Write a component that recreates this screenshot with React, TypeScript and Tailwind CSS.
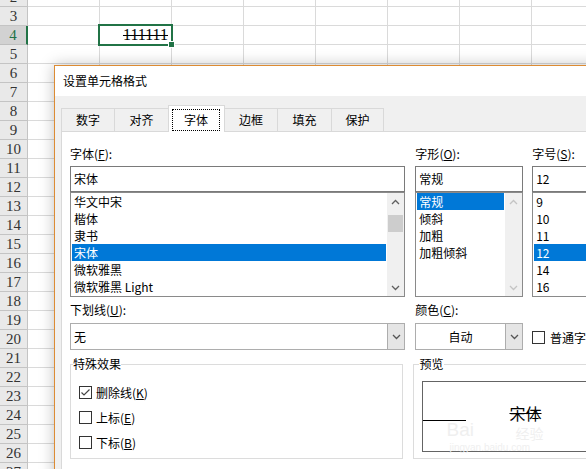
import React from "react";

const rows = Array.from({ length: 26 }, (_, i) => i + 2);
const cols = Array.from({ length: 8 }, (_, i) => i);

function Sheet() {
  return (
    <div className="-mt-[12px] flex flex-col font-[family-name:'Liberation_Serif',serif]">
      {rows.map((r) => (
        <div key={r} className="flex h-[19px]">
          <div
            className={
              r === 4
                ? "flex w-[28px] shrink-0 items-center justify-center border-b border-r-2 border-b-[#bfbfbf] border-r-[#217346] bg-[#d2d2d2] text-[15px] leading-none text-[#217346]"
                : "flex w-[28px] shrink-0 items-center justify-center border-b border-r border-[#c4c4c4] bg-[#e9e9e9] text-[15px] leading-none text-[#333]"
            }
          >
            {r}
          </div>
          {cols.map((c) => (
            <div
              key={c}
              className="flex w-[72px] shrink-0 items-center justify-end border-b border-r border-[#dadada] pr-[3px] text-[16px] leading-none"
            >
              {r === 4 && c === 1 ? <span className="line-through">111111</span> : null}
            </div>
          ))}
        </div>
      ))}
    </div>
  );
}

function Chevron({ up, color }: { up: boolean; color: string }) {
  return (
    <svg width="9" height="6" viewBox="0 0 9 6" className={color}>
      <polyline
        points={up ? "1,5 4.5,1.5 8,5" : "1,1 4.5,4.5 8,1"}
        fill="none"
        stroke="currentColor"
        strokeWidth="1.3"
      />
    </svg>
  );
}

function ScrollBar({ enabled }: { enabled: boolean }) {
  const c = enabled ? "text-[#606060]" : "text-[#c4c4c4]";
  return (
    <div className="flex w-[17px] shrink-0 flex-col bg-[#f0f0f0]">
      <div className="flex h-[17px] items-center justify-center">
        <Chevron up color={c} />
      </div>
      <div className="flex-1 pt-[5px]">
        {enabled && <div className="mx-auto h-[17px] w-[15px] bg-[#cdcdcd]" />}
      </div>
      <div className="flex h-[17px] items-center justify-center">
        <Chevron up={false} color={c} />
      </div>
    </div>
  );
}

function ListBox({
  items,
  selected,
  scroll,
}: {
  items: string[];
  selected: string;
  scroll?: React.ReactNode;
}) {
  return (
    <div className="flex h-[105px] border border-[#8a8a8a] bg-white">
      <div className="flex-1 overflow-hidden px-px">
        {items.map((it) => (
          <div
            key={it}
            className={
              it === selected
                ? "h-[17px] bg-[#0078d7] pl-[2px] leading-[17px] text-white"
                : "h-[17px] pl-[2px] leading-[17px] text-black"
            }
          >
            {it}
          </div>
        ))}
      </div>
      {scroll}
    </div>
  );
}

function Input({ value }: { value: string }) {
  return (
    <div className="flex h-[26px] items-center border border-[#7a7a7a] bg-white pl-[3px]">{value}</div>
  );
}

function Label({ text, k }: { text: string; k: string }) {
  return (
    <div className="h-[16px] leading-[16px]">
      {text}(<span className="underline">{k}</span>):
    </div>
  );
}

function Select({ value, center }: { value: string; center?: boolean }) {
  return (
    <div className="flex h-[27px] border border-[#adadad] bg-white">
      <div className={center ? "flex flex-1 items-center justify-center" : "flex flex-1 items-center pl-[3px]"}>
        {value}
      </div>
      <div className="flex w-[17px] items-center justify-center border-l border-[#adadad] bg-[#e5e5e5]">
        <Chevron up={false} color="text-[#555]" />
      </div>
    </div>
  );
}

function CheckBox({ checked }: { checked?: boolean }) {
  return (
    <div className="flex h-[13px] w-[13px] shrink-0 items-center justify-center border border-[#333] bg-white">
      {checked && (
        <svg width="11" height="11" viewBox="0 0 11 11">
          <polyline points="1.5,5.5 4,8 9.5,2.5" fill="none" stroke="#444" strokeWidth="1.2" />
        </svg>
      )}
    </div>
  );
}

function CheckRow({ text, k, checked }: { text: string; k: string; checked?: boolean }) {
  return (
    <div className="flex h-[25px] items-center gap-[4px] pl-[8px]">
      <CheckBox checked={checked} />
      <span>
        {text}(<span className="underline">{k}</span>)
      </span>
    </div>
  );
}

function Dialog() {
  return (
    <div className="absolute left-[54px] top-[65px] h-[420px] w-[560px] border border-[#dc8b33] bg-[#f0f0f0] text-[12px] text-black shadow-[0_0_14px_rgba(0,0,0,0.25)] font-[family-name:'Noto_Sans_CJK_SC',sans-serif]">
      <div className="flex h-[30px] items-center bg-white pl-[8px]">设置单元格格式</div>
      <div className="pl-[6px] pt-[9px]">
        <div className="flex h-[26px] items-end">
          <div className="flex h-[23px] w-[53px] items-center justify-center border-l border-t border-[#d9d9d9]">数字</div>
          <div className="flex h-[23px] w-[54px] items-center justify-center border-l border-t border-[#d9d9d9]">对齐</div>
          <div className="relative z-10 -mb-px flex h-[27px] w-[57px] border-l border-r border-t border-[#d9d9d9] bg-white pb-[1px] pl-[3px] pr-[4px] pt-[3px]">
            <div className="flex flex-1 items-center justify-center border border-dotted border-black">字体</div>
          </div>
          <div className="flex h-[23px] w-[52px] items-center justify-center border-t border-[#d9d9d9]">边框</div>
          <div className="flex h-[23px] w-[54px] items-center justify-center border-l border-t border-[#d9d9d9]">填充</div>
          <div className="flex h-[23px] w-[53px] items-center justify-center border-l border-r border-t border-[#d9d9d9]">保护</div>
        </div>
        <div className="h-[400px] border border-[#d9d9d9] bg-white pl-[8px] pt-[14px]">
          <div className="flex">
            <div className="w-[336px]">
              <Label text="字体" k="F" />
              <div className="mt-[4px]">
                <Input value="宋体" />
                <ListBox
                  items={["华文中宋", "楷体", "隶书", "宋体", "微软雅黑", "微软雅黑 Light"]}
                  selected="宋体"
                  scroll={<ScrollBar enabled />}
                />
              </div>
            </div>
            <div className="ml-[10px] w-[108px]">
              <Label text="字形" k="O" />
              <div className="mt-[4px]">
                <Input value="常规" />
                <ListBox
                  items={["常规", "倾斜", "加粗", "加粗倾斜"]}
                  selected="常规"
                  scroll={<ScrollBar enabled={false} />}
                />
              </div>
            </div>
            <div className="ml-[9px] w-[80px]">
              <Label text="字号" k="S" />
              <div className="mt-[4px]">
                <Input value="12" />
                <ListBox items={["9", "10", "11", "12", "14", "16"]} selected="12" />
              </div>
            </div>
          </div>

          <div className="mt-[5px] flex">
            <div className="w-[336px]">
              <Label text="下划线" k="U" />
              <div className="mt-[5px]">
                <Select value="无" />
              </div>
            </div>
            <div className="ml-[10px] w-[108px]">
              <Label text="颜色" k="C" />
              <div className="mt-[5px]">
                <Select value="自动" center />
              </div>
            </div>
            <div className="ml-[9px] flex w-[80px] flex-col">
              <div className="h-[16px]" />
              <div className="mt-[5px] flex h-[27px] items-center gap-[5px] pt-[2px]">
                <CheckBox />
                <span className="whitespace-nowrap">
                  普通字体(<span className="underline">N</span>)
                </span>
              </div>
            </div>
          </div>

          <div className="mt-[6px] flex items-start">
            <fieldset className="w-[336px] border border-[#dcdcdc] pb-[3px]">
              <legend className="ml-[2px] leading-[16px]">特殊效果</legend>
              <div className="pt-[8px]">
                <CheckRow text="删除线" k="K" checked />
                <CheckRow text="上标" k="E" />
                <CheckRow text="下标" k="B" />
              </div>
            </fieldset>
            <fieldset className="ml-[10px] w-[200px] border border-[#dcdcdc] pb-[6px]">
              <legend className="ml-[5px] leading-[16px]">预览</legend>
              <div className="relative ml-[8px] mt-[9px] flex h-[71px] items-start border border-[#646464] pt-[22px]">
                <div className="h-[17px] w-[43px] border-b border-black" />
                <div className="relative z-10 ml-[43px] text-[16px] leading-[18px] line-through">宋体</div>
                <div className="absolute left-[23px] top-[38px] text-[19px] leading-none text-[#efefef] font-[family-name:'Liberation_Sans',sans-serif]">
                  Bai
                </div>
                <div className="absolute left-[92px] top-[44px] text-[14px] leading-none text-[#efefef]">
                  经验
                </div>
                <div className="absolute left-[26px] top-[61px] text-[10px] leading-none text-[#efefef] font-[family-name:'Liberation_Sans',sans-serif]">
                  jingyan.baidu.com
                </div>
              </div>
            </fieldset>
          </div>
        </div>
      </div>
    </div>
  );
}

export default function App() {
  return (
    <div className="relative h-[469px] w-[586px] overflow-hidden bg-white">
      <Sheet />
      <div className="absolute left-[98px] top-[24px] h-[22px] w-[75px] border-2 border-[#217346]" />
      <div className="absolute left-[168px] top-[41px] h-[7px] w-[7px] border border-white bg-[#217346]" />
      <Dialog />
    </div>
  );
}
